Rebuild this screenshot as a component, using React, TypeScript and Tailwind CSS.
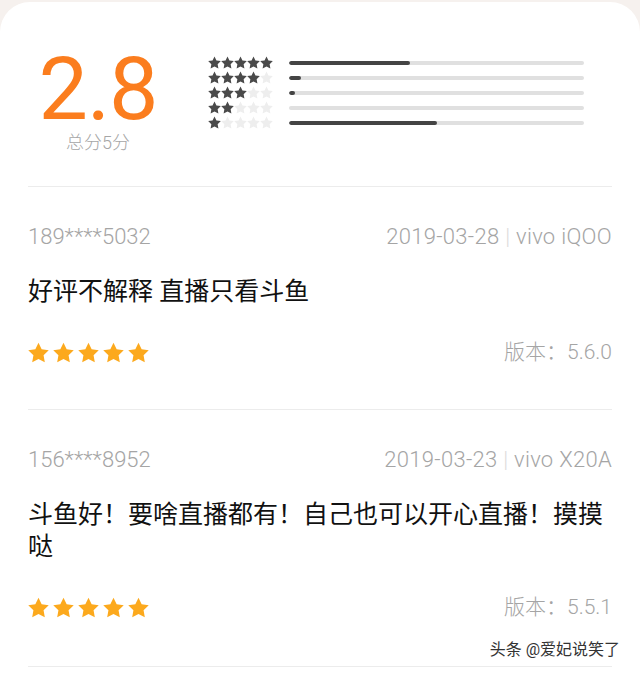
import React from 'react';

const font = { fontFamily: 'Roboto, "Noto Sans CJK SC", sans-serif' };

const Star = ({ className }: { className: string }) => (
  <svg viewBox="0 0 24 24" className={className}>
    <path
      fill="currentColor"
      d="M12 .8l3.6 7.4 8.1 1.1-5.9 5.7 1.4 8.1L12 19.3l-7.2 3.8 1.4-8.1L.3 9.3l8.1-1.1z"
    />
  </svg>
);

const dist = [
  { stars: 5, pct: 41 },
  { stars: 4, pct: 4 },
  { stars: 3, pct: 2 },
  { stars: 2, pct: 0 },
  { stars: 1, pct: 50 },
];

const reviews = [
  {
    user: '189****5032',
    date: '2019-03-28',
    device: 'vivo iQOO',
    text: '好评不解释 直播只看斗鱼',
    version: '5.6.0',
  },
  {
    user: '156****8952',
    date: '2019-03-23',
    device: 'vivo X20A',
    text: '斗鱼好！要啥直播都有！自己也可以开心直播！摸摸哒',
    version: '5.5.1',
  },
];

export default function App() {
  return (
    <div className="w-[640px] h-[673px] bg-[#f6f1ee] pt-[2px] overflow-hidden" style={font}>
      <div className="relative h-full bg-white rounded-t-[30px] px-[28px]">
        {/* summary */}
        <div className="flex items-start pt-[43px] h-[185px] border-b border-[#ececec]">
          <div className="w-[140px] flex flex-col items-center pt-[9px]">
            <span className="text-[88px] leading-[70px] font-normal text-[#fb7d1e] tracking-[-1px]">2.8</span>
            <span className="mt-[8px] text-[18px] leading-[22px] font-light text-[#a6a6a6]">总分5分</span>
          </div>
          <div className="flex-1 pt-[10px] pl-[40px] pr-[28px] flex flex-col">
            {dist.map((d) => (
              <div key={d.stars} className="flex items-center h-[15px]">
                <div className="flex w-[66px]">
                  {[0, 1, 2, 3, 4].map((i) => (
                    <Star
                      key={i}
                      className={`w-[13px] h-[13px] ${i < d.stars ? 'text-[#4a4a4a]' : 'text-[#eeeeee]'}`}
                    />
                  ))}
                </div>
                <div className="ml-[15px] flex-1 h-[4px] rounded-full bg-[#e0e0e0] overflow-hidden">
                  <div className="h-full rounded-full bg-[#444]" style={{ width: `${d.pct}%` }} />
                </div>
              </div>
            ))}
          </div>
        </div>

        {reviews.map((r, idx) => (
          <div
            key={r.user}
            className={`border-b border-[#ececec] ${idx === 0 ? 'h-[223px]' : 'h-[257px]'}`}
          >
            <div className="flex justify-between items-center pt-[37px] text-[22px] leading-[26px] text-[#a5a5a5] font-light">
              <span>{r.user}</span>
              <span className="tracking-[0.3px]">
                {r.date} <span className="text-[#dcdcdc]">|</span> {r.device}
              </span>
            </div>
            <p className="mt-[26px] text-[25px] leading-[32px] text-[#111]">{r.text}</p>
            <div className="flex justify-between items-center mt-[31px]">
              <div className="flex gap-[4px]">
                {[0, 1, 2, 3, 4].map((i) => (
                  <Star key={i} className="w-[21px] h-[21px] text-[#fca91d]" />
                ))}
              </div>
              <span className="text-[21px] leading-[26px] text-[#a5a5a5] font-light">版本：{r.version}</span>
            </div>
          </div>
        ))}

        <span
          className="absolute right-[20px] top-[637px] text-[16px] leading-[22px] text-[#333]"
          style={{ textShadow: '0 0 2px #fff, 0 0 2px #fff' }}
        >
          头条 @爱妃说笑了
        </span>
      </div>
    </div>
  );
}
